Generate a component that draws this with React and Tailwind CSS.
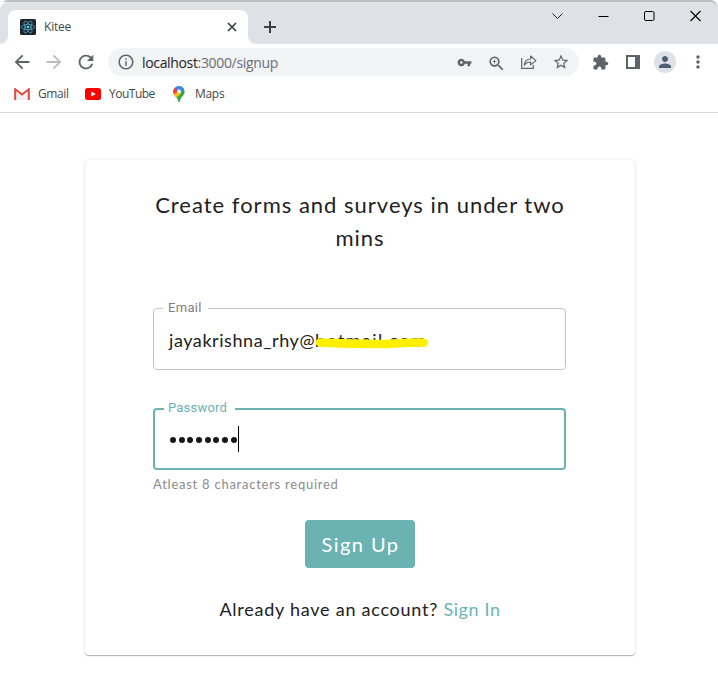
import React from "react";
import {
  MdArrowBack,
  MdArrowForward,
  MdRefresh,
  MdInfoOutline,
  MdVpnKey,
  MdZoomIn,
  MdStarBorder,
  MdExtension,
  MdPerson,
  MdMoreVert,
} from "react-icons/md";

function ReactLogo() {
  return (
    <svg width="16" height="16" viewBox="0 0 16 16" className="shrink-0">
      <rect width="16" height="16" rx="1.5" fill="#20232a" />
      <g fill="none" stroke="#4ba3bd" strokeWidth="0.8">
        <ellipse cx="8" cy="8" rx="6.6" ry="2.6" />
        <ellipse cx="8" cy="8" rx="6.6" ry="2.6" transform="rotate(60 8 8)" />
        <ellipse cx="8" cy="8" rx="6.6" ry="2.6" transform="rotate(120 8 8)" />
      </g>
      <circle cx="8" cy="8" r="1.3" fill="#61dafb" />
    </svg>
  );
}

function TitleBar() {
  return (
    <div className="flex h-[44px] rounded-t-[8px] border-t-2 border-[#bdbdbd] bg-[#dee1e6]">
      <div className="flex w-2 items-end bg-white">
        <div className="h-full w-2 rounded-br-[8px] bg-[#dee1e6] rounded-tl-[8px]" />
      </div>
      <div className="mt-2 flex h-[34px] w-[240px] items-center rounded-t-[8px] bg-white pl-3 pr-[11px]">
        <ReactLogo />
        <span className="ml-2 flex-1 text-[12px] tracking-[-0.2px] text-[#45494d]">Kitee</span>
        <svg width="10" height="10" viewBox="0 0 10 10">
          <path d="M1 1l8 8M9 1l-8 8" stroke="#3c4043" strokeWidth="1.7" />
        </svg>
      </div>
      <div className="w-2 bg-white">
        <div className="h-full rounded-bl-[8px] bg-[#dee1e6]" />
      </div>
      <svg width="14" height="14" viewBox="0 0 14 14" className="ml-[7px] mt-[18px]">
        <path d="M7 1v12M1 7h12" stroke="#3c4043" strokeWidth="2" />
      </svg>
      <div className="ml-auto flex h-7 items-center gap-[35px] pr-[17px]">
        <svg width="11" height="12" viewBox="0 0 11 12">
          <path d="M.5 3.5l5 5 5-5" stroke="#222" fill="none" />
        </svg>
        <svg width="11" height="12" viewBox="0 0 11 12">
          <path d="M.5 6.5h10" stroke="#000" />
        </svg>
        <svg width="11" height="12" viewBox="0 0 11 12">
          <rect x=".5" y="1.5" width="9.500" height="9" rx="1.5" stroke="#000" fill="none" />
        </svg>
        <svg width="11" height="12" viewBox="0 0 11 12">
          <path d="M.5 1l10 10M10.500 1l-10 10" stroke="#000" strokeWidth="1.1" />
        </svg>
      </div>
    </div>
  );
}

function Toolbar() {
  return (
    <div className="flex h-9 items-center pl-[11px] text-[#5f6368]">
      <MdArrowBack size={22} />
      <MdArrowForward size={22} className="ml-[10px] text-[#babcbe]" />
      <MdRefresh size={22} className="ml-[10px]" />
      <div className="ml-[11px] flex h-7 w-[471px] items-center rounded-full bg-[#f1f3f4] pl-[9px]">
        <MdInfoOutline size={18} />
        <span className="ml-[7px] text-[14px] tracking-[-0.34px] text-[#6b6f74]">
          <span className="text-[#202124]">localhost</span>:3000/signup
        </span>
        <div className="ml-auto flex items-center pr-[9px]">
          <MdVpnKey size={15} />
          <MdZoomIn size={19} className="relative top-px ml-[15px]" />
          <svg width="16" height="16" viewBox="0 0 16 16" className="ml-[15px]" fill="none" stroke="#5f6368" strokeWidth="1.2">
            <path d="M.7 4v10.300h11.600V11" />
            <path d="M3.300 11.200C3.600 7.200 6.200 5 9.600 5V2l5.300 4.600-5.300 4.300V8C6.800 8 4.800 9 3.300 11.200z" strokeLinejoin="round" />
          </svg>
          <MdStarBorder size={18} className="ml-[15px]" />
        </div>
      </div>
      <MdExtension size={17} className="ml-[13px]" />
      <svg width="14" height="14" viewBox="0 0 14 14" className="ml-[17px]">
        <path d="M0 0h14v14H0zM2 2v10h7V2z" fill="#5f6368" fillRule="evenodd" />
      </svg>
      <div className="ml-[14px] flex size-[22px] items-center justify-center rounded-full bg-[#dee1e6] text-[#4d5d75]">
        <MdPerson size={18} />
      </div>
      <MdMoreVert size={20} className="ml-[12px]" />
    </div>
  );
}

function Bookmarks() {
  return (
    <div className="flex h-[33px] items-center border-b border-[#d8d9db] pb-[5px] pl-[14px] text-[12px] text-[#45494d]">
      <svg width="16" height="12" viewBox="0 0 16 12">
        <path d="M2 3l6 4.500L14 3v9H2z" fill="#f0f0f0" />
        <path d="M1.200 12V1.300L8 6.500l6.800-5.200V12" fill="none" stroke="#dd4b3e" strokeWidth="2" />
      </svg>
      <span className="ml-2 w-[31px] whitespace-nowrap tracking-[-0.4px]">Gmail</span>
      <svg width="16" height="12" viewBox="0 0 16 12" className="ml-4">
        <rect width="16" height="12" rx="2.500" fill="#f00" />
        <path d="M6.300 3.400v5.200l4.500-2.600z" fill="#fff" />
      </svg>
      <span className="ml-2 w-[47px] whitespace-nowrap tracking-[-0.5px]">YouTube</span>
      <svg width="12" height="16" viewBox="0 0 12 16" className="ml-[17px]">
        <path d="M6 0a5.600 5.600 0 0 1 5.600 5.700c0 4-4.400 5.300-4.900 9.700-.2.700-1.200.7-1.400 0C4.800 11 .4 9.700.4 5.700A5.600 5.600 0 0 1 6 0z" fill="#34a853" />
        <path d="M1.700 2.100L6 5.700.9 8.500A6 6 0 0 1 1.700 2.100z" fill="#ea4335" />
        <path d="M.9 8L6 5.700l2 2-4.900 4A14 14 0 0 1 .9 8z" fill="#fbbc04" />
        <path d="M1.700 2.100A5.600 5.600 0 0 1 11 3.200L6 7z" fill="#4285f4" />
        <path d="M1.700 2.100l3 2.500L3 6.600.5 6c-.1-1.600.4-2.900 1.200-3.900z" fill="#ea4335" />
        <circle cx="6" cy="5.500" r="2" fill="#fff" />
      </svg>
      <span className="ml-[10px] tracking-[-0.3px]">Maps</span>
    </div>
  );
}

function Field({ label, focused, children }) {
  return (
    <div
      className={
        focused
          ? "relative flex h-[62px] items-center rounded-[4px] border-2 border-[#6bb3b3] pl-[14px]"
          : "relative flex h-[62px] items-center rounded-[4px] border border-[#c4c4c4] pl-[15px]"
      }
    >
      <span
        className={
          focused
            ? "absolute -top-[10px] left-[9px] w-[71px] whitespace-nowrap bg-white pl-[4px] font-['Roboto',sans-serif] text-[13px] leading-[16px] tracking-[0.2px] text-[#6bb3b3]"
            : "absolute -top-[9px] left-[9px] w-[45px] whitespace-nowrap bg-white pl-[5px] font-['Roboto',sans-serif] text-[13px] leading-[16px] tracking-[0.3px] text-[#808080]"
        }
      >
        {label}
      </span>
      {children}
    </div>
  );
}

export default function App() {
  return (
    <div className="flex h-[700px] w-[718px] flex-col overflow-hidden bg-white font-['Open_Sans',sans-serif]">
      <TitleBar />
      <Toolbar />
      <Bookmarks />
      <main className="px-[85px] pt-[47px] font-['Lato',sans-serif] text-[#212121]">
        <section className="h-[495px] w-[550px] rounded-[4px] px-[68px] pt-[28px] shadow-[0_1px_1px_rgba(0,0,0,0.28),0_0_3px_rgba(0,0,0,0.12)]">
          <h1 className="text-center text-[22px] leading-[33px] tracking-[1px]">
            <span className="whitespace-nowrap">Create forms and surveys in under two</span>
            <br />
            mins
          </h1>
          <div className="mt-[54px] w-[413px]">
            <Field label="Email">
              <div className="relative mt-[2px] whitespace-nowrap text-[18px] leading-6 tracking-[0.57px]">
                jayakrishna_rhy@<span className="tracking-[1.4px]">hotmail.com</span>
                <svg width="114" height="12" viewBox="0 0 114 12" className="absolute left-[146px] top-[9px]">
                  <path d="M5 5.500C25 6.500 48 7 68 7c14 0 24-2 41-1.300" stroke="#fff000" strokeWidth="8.500" strokeLinecap="round" fill="none" />
                </svg>
              </div>
            </Field>
            <div className="h-[38px]" />
            <Field label="Password" focused>
              <div className="flex items-center pl-[1px]">
                <div className="mt-[2px] flex gap-[2.700px]">
                  {[0, 1, 2, 3, 4, 5, 6, 7].map((i) => (
                    <span key={i} className="size-[6px] rounded-full bg-[#171717]" />
                  ))}
                </div>
                <span className="ml-px h-[26px] w-px bg-black" />
              </div>
            </Field>
            <p className="mt-[4px] whitespace-nowrap text-[13px] leading-5 tracking-[0.75px] text-[#8b8b8b]">Atleast 8 characters required</p>
          </div>
          <div className="mt-[26px] flex justify-center">
            <button className="h-12 w-[110px] whitespace-nowrap rounded-[4px] bg-[#6bb3b3] pl-[1px] text-[20px] tracking-[1.45px] text-white">
              Sign Up
            </button>
          </div>
          <p className="mt-[29px] whitespace-nowrap text-center text-[18px] leading-6 tracking-[0.75px]">
            Already have an account? <a className="tracking-[0.6px] text-[#6bb3b3]">Sign In</a>
          </p>
        </section>
      </main>
    </div>
  );
}
